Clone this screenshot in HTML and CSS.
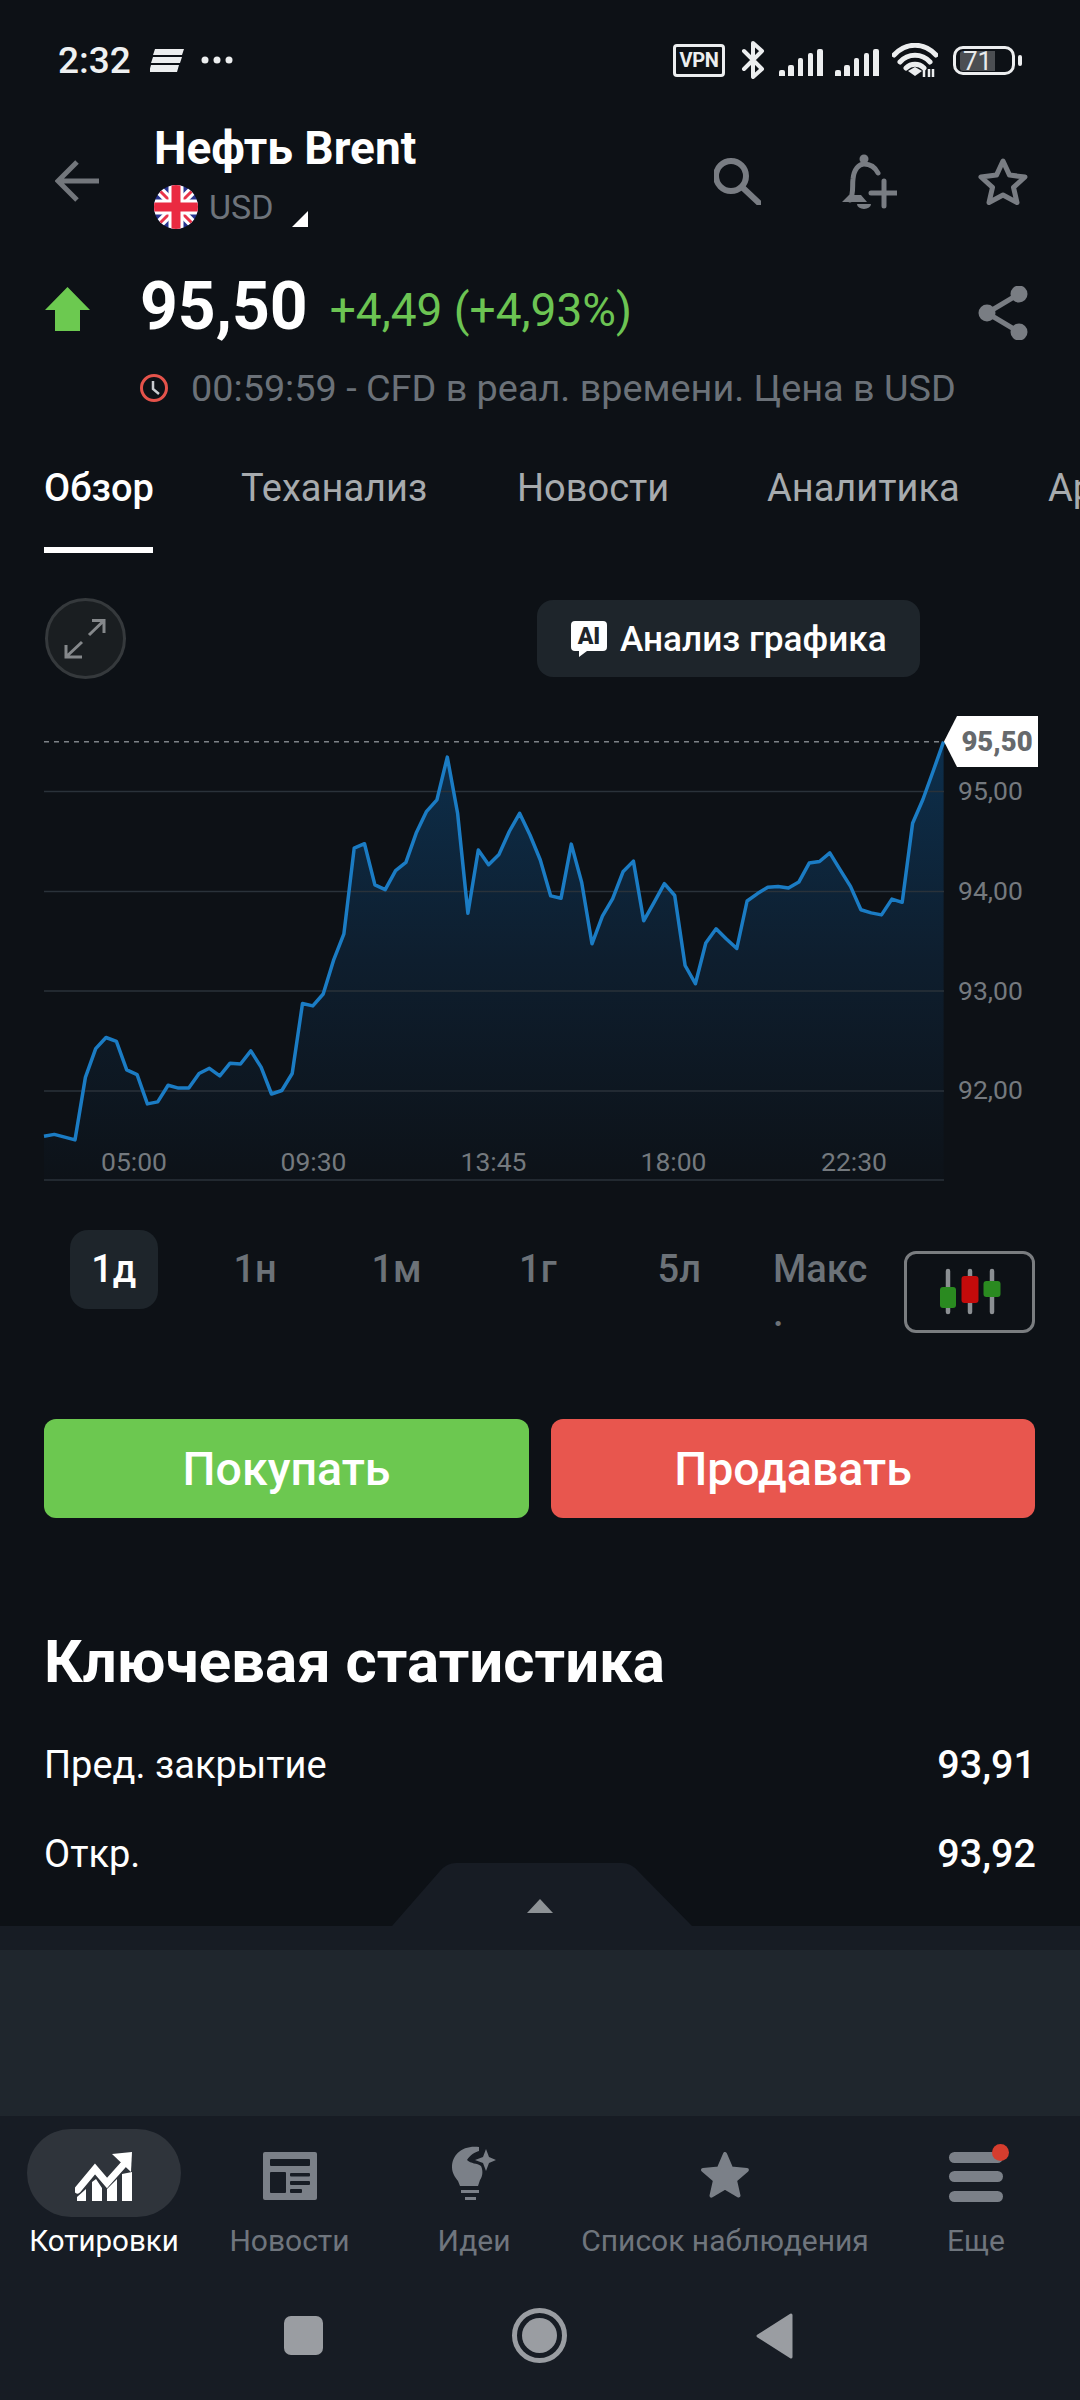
FILE: index.html
```html
<!DOCTYPE html>
<html lang="ru">
<head>
<meta charset="utf-8">
<title>Нефть Brent</title>
<link rel="stylesheet" href="styles.css">
</head>
<body>
<div class="screen">
  <main class="content">
    <div class="status">
      <span class="clock-time">2:32</span>
      <svg class="st-lines" viewBox="150 49 34 23"><path d="M155 49H184L182 55H153ZM153 57H182L180 63H151ZM151 65H179L177 72H149Z"/></svg>
      <svg class="st-dots" viewBox="201 54 32 12"><circle cx="205" cy="60" r="3.5"/><circle cx="217" cy="60" r="3.5"/><circle cx="229" cy="60" r="3.5"/></svg>
      <div class="status-right">
        <span class="vpn">VPN</span>
        <svg class="st-bt" viewBox="741 41 24 38"><path d="M744 51L762 69L753 77V43L762 51L744 69"/></svg>
        <svg class="st-signal" viewBox="779 47 44 27"><path d="M779 70a2 2 0 0 1 2-2h2a2 2 0 0 1 2 2v4h-6ZM788 65a2 2 0 0 1 2-2h2a2 2 0 0 1 2 2v9h-6ZM798 58a2 2 0 0 1 2-2h1a2 2 0 0 1 2 2v16h-5ZM808 53a2 2 0 0 1 2-2h1a2 2 0 0 1 2 2v21h-5ZM817 49a2 2 0 0 1 2-2h2a2 2 0 0 1 2 2v25h-6Z"/></svg>
        <svg class="st-signal" viewBox="779 47 44 27"><path d="M779 70a2 2 0 0 1 2-2h2a2 2 0 0 1 2 2v4h-6ZM788 65a2 2 0 0 1 2-2h2a2 2 0 0 1 2 2v9h-6ZM798 58a2 2 0 0 1 2-2h1a2 2 0 0 1 2 2v16h-5ZM808 53a2 2 0 0 1 2-2h1a2 2 0 0 1 2 2v21h-5ZM817 49a2 2 0 0 1 2-2h2a2 2 0 0 1 2 2v25h-6Z"/></svg>
        <svg class="st-wifi" viewBox="892 43 46 34">
          <path class="wave" d="M894 55C906 42 924 42 936 55M900 62C908 53 922 53 930 62M906 68C911 63 919 63 924 68"/>
          <path class="wave-dot" d="M908 71L915 67L922 71L915 76Z"/>
          <path class="wave-arrows" d="M924 69V77M929 69V77M933 69V77"/>
        </svg>
        <div class="battery"><span class="battery-level">71</span></div>
        <span class="battery-nub"></span>
      </div>
    </div>

    <header class="head">
      <svg class="ic-back" viewBox="55 160 44 42"><path d="M99 181H59M77 162L58 181L77 200"/></svg>
      <div class="instrument">
        <h1 class="title">Нефть Brent</h1>
        <div class="currency">
          <svg class="flag" viewBox="0 0 44 44">
            <defs><clipPath id="flag-round"><circle cx="22" cy="22" r="22"/></clipPath></defs>
            <g clip-path="url(#flag-round)">
              <rect width="44" height="44" fill="#27348f"/>
              <path d="M0 0L44 44M44 0L0 44" stroke="#fff" stroke-width="9"/>
              <path d="M0 0L44 44M44 0L0 44" stroke="#e8344a" stroke-width="3"/>
              <path d="M22 0V44M0 22H44" stroke="#fff" stroke-width="15"/>
              <path d="M22 0V44M0 22H44" stroke="#ea2a41" stroke-width="9"/>
            </g>
          </svg>
          <span class="cur-label">USD</span>
          <span class="corner"></span>
        </div>
      </div>
      <div class="actions">
        <svg class="ic-search" viewBox="715 156 47 47"><circle cx="732" cy="174" r="15"/><path d="M743 185L760 201"/></svg>
        <svg class="ic-bell" viewBox="843 153 55 55">
          <path class="bell-line" d="M851 199C855 192 853 185 854 178C855 168 860 163 865 163C871 163 876 166 879 172"/>
          <path class="bell-fill" d="M843 201L850 194L862 194L868 201ZM858 203H872A7 5 0 0 1 858 203Z"/>
          <circle class="bell-fill" cx="865" cy="158" r="4.500"/>
          <path class="bell-line" d="M872 192H898M885 180V205"/>
        </svg>
        <svg class="ic-star" viewBox="978 157 50 47"><path d="M1003 160L1009.5 174.1L1025 176L1013.5 186.4L1017 201.5L1003 194L989 201.5L992.5 186.4L981 176L996.5 174.1Z"/></svg>
      </div>
    </header>

    <section class="quote">
      <svg class="ic-up" viewBox="45 288 45 44"><path d="M67.5 288L90 311H80V332H55V311H45Z"/></svg>
      <span class="price">95,50</span>
      <span class="change">+4,49 (+4,93%)</span>
      <svg class="ic-share" viewBox="978 286 50 54">
        <path d="M1019 294L987 313L1019 332"/>
        <circle cx="1019" cy="294" r="8.5"/><circle cx="987" cy="313" r="8.5"/><circle cx="1019" cy="332" r="8.5"/>
      </svg>
    </section>

    <div class="meta">
      <svg class="ic-clock" viewBox="140 374 28 28"><circle cx="154" cy="388" r="12.5"/><path d="M153 381V389L159 394"/></svg>
      <span>00:59:59 - CFD в реал. времени. Цена в USD</span>
    </div>

    <nav class="tabs">
      <span class="tab tab-on">Обзор</span>
      <span class="tab">Теханализ</span>
      <span class="tab">Новости</span>
      <span class="tab">Аналитика</span>
      <span class="tab">Архив</span>
    </nav>

    <div class="toolbar">
      <span class="expand">
        <svg viewBox="48 601 75 75"><path d="M89 635L104 620.5M92 620.5H104V633M82 642L66 657M66 645V657H82"/></svg>
      </span>
      <span class="ai-btn">
        <svg class="ai-mark" viewBox="0 0 36 36">
          <path d="M4 0H32A4 4 0 0 1 36 4V26A4 4 0 0 1 32 30H16L8 36V30H4A4 4 0 0 1 0 26V4A4 4 0 0 1 4 0Z"/>
          <text x="18" y="23" text-anchor="middle">AI</text>
        </svg>
        Анализ графика
      </span>
    </div>

    <svg class="chart" viewBox="0 700 1080 490">
      <defs>
        <linearGradient id="area" gradientUnits="userSpaceOnUse" x1="0" y1="741" x2="0" y2="1180">
          <stop offset="0" stop-color="#0d2f4c"/>
          <stop offset="0.5" stop-color="#0e1e2e"/>
          <stop offset="1" stop-color="#0d1218"/>
        </linearGradient>
      </defs>
      <path class="area" d="M44 1136.3L54.3 1134.4L64.7 1137.1L75 1139.9L85.4 1077.4L95.7 1048.6L106 1037.5L116.4 1041.4L126.7 1069.9L137.1 1074.7L147.4 1103.9L157.7 1101.9L168.1 1085.3L178.4 1088.1L188.8 1088.1L199.1 1073.5L209.4 1068.3L219.8 1075.8L230.1 1063.2L240.5 1064L250.8 1050.9L261.1 1067.1L271.5 1094L281.8 1090.5L292.2 1073.5L302.5 1003.5L312.8 1005.9L323.2 994L333.5 960.4L343.9 933.9L354.2 848.1L364.5 843.7L374.9 884.9L385.2 889.6L395.6 870.6L405.9 862.3L416.2 833.1L426.6 811.3L436.9 799.9L447.3 757.1L457.6 813.3L467.9 913.3L478.3 850L488.6 864.7L499 854.4L509.3 831.5L519.6 813.3L530 835L540.3 860L550.7 895.9L561 898.3L571.3 844.1L581.7 882.5L592 943.8L602.4 916.1L612.7 898.7L623 871.8L633.4 861.1L643.7 920.8L654.1 902.3L664.4 883.7L674.7 895.5L685.1 965.5L695.4 983.7L705.8 943L716.1 928.8L726.4 939L736.8 948.5L747.1 901L757.5 893.6L767.8 887.2L778.1 886.4L788.5 888L798.8 882.1L809.2 863.1L819.5 861.5L829.8 852.8L840.2 869.8L850.5 886.4L860.9 909.8L871.2 912.9L881.5 914.9L891.9 899.1L902.2 902.3L912.6 823.2L922.9 799.5L933.2 771L943.6 741.7V1180H44Z"/>
      <path class="grid" d="M44 791.5H944M44 891.6H944M44 991H944M44 1091H944M44 1180H944"/>
      <path class="last-line" d="M44 741.7H944"/>
      <path class="trace" d="M44 1136.3L54.3 1134.4L64.7 1137.1L75 1139.9L85.4 1077.4L95.7 1048.6L106 1037.5L116.4 1041.4L126.7 1069.9L137.1 1074.7L147.4 1103.9L157.7 1101.9L168.1 1085.3L178.4 1088.1L188.8 1088.1L199.1 1073.5L209.4 1068.3L219.8 1075.8L230.1 1063.2L240.5 1064L250.8 1050.9L261.1 1067.1L271.5 1094L281.8 1090.5L292.2 1073.5L302.5 1003.5L312.8 1005.9L323.2 994L333.5 960.4L343.9 933.9L354.2 848.1L364.5 843.7L374.9 884.9L385.2 889.6L395.6 870.6L405.9 862.3L416.2 833.1L426.6 811.3L436.9 799.9L447.3 757.1L457.6 813.3L467.9 913.3L478.3 850L488.6 864.7L499 854.4L509.3 831.5L519.6 813.3L530 835L540.3 860L550.7 895.9L561 898.3L571.3 844.1L581.7 882.5L592 943.8L602.4 916.1L612.7 898.7L623 871.8L633.4 861.1L643.7 920.8L654.1 902.3L664.4 883.7L674.7 895.5L685.1 965.5L695.4 983.7L705.8 943L716.1 928.8L726.4 939L736.8 948.5L747.1 901L757.5 893.6L767.8 887.2L778.1 886.4L788.5 888L798.8 882.1L809.2 863.1L819.5 861.5L829.8 852.8L840.2 869.8L850.5 886.4L860.9 909.8L871.2 912.9L881.5 914.9L891.9 899.1L902.2 902.3L912.6 823.2L922.9 799.5L933.2 771L943.6 741.7"/>
      <path class="tag" d="M944 741.5L957 716H1038V767H957Z"/>
      <text class="tag-text" x="997" y="751" text-anchor="middle">95,50</text>
      <text class="axis" x="958" y="800">95,00</text>
      <text class="axis" x="958" y="900">94,00</text>
      <text class="axis" x="958" y="1000">93,00</text>
      <text class="axis" x="958" y="1099">92,00</text>
      <text class="axis" x="134" y="1171" text-anchor="middle">05:00</text>
      <text class="axis" x="313.5" y="1171" text-anchor="middle">09:30</text>
      <text class="axis" x="493.5" y="1171" text-anchor="middle">13:45</text>
      <text class="axis" x="673.5" y="1171" text-anchor="middle">18:00</text>
      <text class="axis" x="854" y="1171" text-anchor="middle">22:30</text>
    </svg>

    <div class="ranges">
      <span class="range range-on">1д</span>
      <span class="range">1н</span>
      <span class="range">1м</span>
      <span class="range">1г</span>
      <span class="range">5л</span>
      <span class="range range-max">Макс.</span>
      <span class="chart-type">
        <svg viewBox="907 1254 125 76">
          <path class="wick" d="M948 1271V1312M970 1271V1312M992 1271V1312"/>
          <rect class="up" x="940" y="1287" width="16" height="21" rx="3"/>
          <rect class="down" x="961.500" y="1276" width="17" height="27" rx="3"/>
          <rect class="up" x="983.500" y="1281" width="17" height="16" rx="3"/>
        </svg>
      </span>
    </div>

    <div class="trade">
      <span class="btn btn-buy">Покупать</span>
      <span class="btn btn-sell">Продавать</span>
    </div>

    <h2 class="stats-title">Ключевая статистика</h2>
    <dl class="stats">
      <div class="stat"><dt>Пред. закрытие</dt><dd>93,91</dd></div>
      <div class="stat"><dt>Откр.</dt><dd>93,92</dd></div>
    </dl>
  </main>

  <footer class="sheet">
    <svg class="handle" viewBox="392 1863 300 63">
      <path class="handle-body" d="M392 1926L440 1871Q447 1863 456 1863H622Q631 1863 638 1871L692 1926Z"/>
      <path class="handle-tip" d="M540 1899L553 1913H527Z"/>
    </svg>
    <div class="sheet-band"></div>
    <div class="sheet-panel"></div>
    <div class="bottom">
      <nav class="dock">
        <div class="dock-item dock-on">
          <span class="dock-icon">
            <svg class="ic-nav-chart" viewBox="75 2148 58 50">
              <path class="rise" d="M77.500 2186L95 2165L107 2179L124 2160"/>
              <path d="M112 2150L132 2148L131 2168Z"/>
              <path d="M77 2197V2193L86 2185V2197ZM92 2197V2178L96 2175L102 2184V2197ZM107 2197V2185L117 2175V2197ZM122 2197V2170L132 2168V2197Z"/>
            </svg>
          </span>
          <span class="dock-label">Котировки</span>
        </div>
        <div class="dock-item">
          <span class="dock-icon">
            <svg class="ic-news" viewBox="262 2149 54 48">
              <rect class="sheet-fg" x="262" y="2149" width="54" height="48" rx="2"/>
              <rect class="sheet-bg" x="269" y="2156" width="40" height="7" rx="1"/>
              <rect class="sheet-bg" x="269" y="2169" width="16" height="21" rx="1"/>
              <rect class="sheet-bg" x="289" y="2170" width="20" height="3.500" rx="1"/>
              <rect class="sheet-bg" x="289" y="2178" width="20" height="4" rx="1"/>
              <rect class="sheet-bg" x="289" y="2186" width="12" height="4" rx="1"/>
            </svg>
          </span>
          <span class="dock-label">Новости</span>
        </div>
        <div class="dock-item">
          <span class="dock-icon">
            <svg class="ic-idea" viewBox="455 2146 44 54">
              <path d="M482 2147C465 2145 455 2155 455 2167C455 2173 458 2177 461 2181L463 2186H481L483 2180C486 2176 486 2170 484 2166C480 2163 474 2164 470 2160C473 2155 478 2152 482 2151ZM464 2190H482V2193H464ZM468 2197H479V2200H468ZM489 2149L492 2157L499 2160L492 2163L489 2171L486 2163L478 2160L486 2157Z"/>
            </svg>
          </span>
          <span class="dock-label">Идеи</span>
        </div>
        <div class="dock-item">
          <span class="dock-icon">
            <svg class="ic-watch" viewBox="700 2149 50 48"><path d="M725 2151L731.200 2165.500L746.900 2166.900L735 2177.200L738.500 2192.600L725 2184.500L711.500 2192.600L715 2177.200L703.100 2166.900L718.800 2165.500Z"/></svg>
          </span>
          <span class="dock-label">Список наблюдения</span>
        </div>
        <div class="dock-item">
          <span class="dock-icon">
            <span class="burger"><i></i><i></i><i></i><b class="burger-dot"></b></span>
          </span>
          <span class="dock-label">Еще</span>
        </div>
      </nav>
      <div class="sysnav">
        <span class="sys-square"></span>
        <span class="sys-home"></span>
        <svg class="sys-back" viewBox="755 2312 37 46"><path d="M790 2314V2356L757 2335Z"/></svg>
      </div>
    </div>
  </footer>
</div>
</body>
</html>
```

FILE: styles.css
```css
* { box-sizing: border-box; margin: 0; padding: 0; }
html, body { width: 1080px; height: 2400px; background: #0d1116; }
body { font-family: Roboto, "Liberation Sans", sans-serif; color: #fff; overflow: hidden; }
svg { display: block; flex: none; }

.screen { width: 1080px; height: 2400px; display: flex; flex-direction: column; overflow: hidden; }
.content { flex: 1; min-height: 0; overflow: hidden; }

/* status bar */
.status { height: 120px; padding: 0 58px 0 58px; display: flex; align-items: center; }
.clock-time { font-size: 37px; font-weight: 500; color: #eef0f1; width: 72px; white-space: nowrap; }
.st-lines { width: 34px; height: 23px; margin-left: 20px; fill: #eceeef; }
.st-dots { width: 32px; height: 12px; margin-left: 17px; fill: #eceeef; }
.status-right { margin-left: auto; display: flex; align-items: center; }
.vpn { width: 52px; height: 33px; border: 3.5px solid #eceeef; border-radius: 4px; font-size: 20px; font-weight: 700; color: #eceeef; line-height: 26px; text-align: center; letter-spacing: -0.3px; }
.st-bt { width: 24px; height: 38px; margin-left: 16px; fill: none; stroke: #eceeef; stroke-width: 4; stroke-linejoin: round; stroke-linecap: round; }
.st-signal { width: 44px; height: 27px; margin: 5px 0 0 14px; fill: #eceeef; }
.st-signal + .st-signal { margin-left: 12px; }
.st-wifi { width: 46px; height: 34px; margin-left: 13px; fill: none; }
.wave { stroke: #eceeef; stroke-width: 5; stroke-linecap: round; }
.wave-dot { fill: #eceeef; }
.wave-arrows { stroke: #eceeef; stroke-width: 2.5; }
.battery { width: 62px; height: 29px; margin-left: 15px; border: 3px solid #eceeef; border-radius: 10px; padding: 2px 0 0 4px; }
.battery-level { display: block; width: 35px; height: 20px; background: #4b4e52; border-radius: 3px 0 0 3px; font-size: 26px; line-height: 20px; text-align: center; color: #e8eaeb; }
.battery-nub { width: 4px; height: 11px; margin-left: 3px; background: #eceeef; border-radius: 2px; }

/* instrument header */
.head { height: 122px; padding: 0 52px 0 55px; display: flex; align-items: center; }
.ic-back { width: 44px; height: 42px; fill: none; stroke: #73777c; stroke-width: 5; }
.instrument { margin-left: 55px; align-self: flex-start; padding-top: 3px; }
.title { font-size: 46px; line-height: 50px; font-weight: 700; white-space: nowrap; }
.currency { margin-top: 14px; height: 40px; display: flex; align-items: center; position: relative; }
.flag { width: 44px; height: 44px; }
.cur-label { margin-left: 11px; font-size: 34px; color: #6e747b; line-height: 40px; }
.corner { width: 0; height: 0; margin: 23px 0 0 18px; border-style: solid; border-width: 0 0 16px 16px; border-color: transparent transparent #fff transparent; }
.actions { margin-left: auto; display: flex; align-items: center; gap: 81px; }
.ic-search { width: 47px; height: 47px; fill: none; stroke: #797d83; stroke-width: 6; stroke-linecap: round; }
.ic-bell { width: 55px; height: 55px; }
.bell-line { fill: none; stroke: #797d83; stroke-width: 5; stroke-linecap: round; }
.bell-fill { fill: #797d83; }
.ic-star { width: 50px; height: 47px; fill: none; stroke: #797d83; stroke-width: 5; stroke-linejoin: round; }

/* last price */
.quote { margin-top: 27px; height: 76px; padding: 0 52px 0 45px; display: flex; align-items: center; }
.ic-up { width: 45px; height: 44px; fill: #6cc950; margin-top: 4px; }
.price { margin-left: 50px; font-size: 66px; line-height: 76px; font-weight: 700; }
.change { margin-left: 22px; font-size: 46px; color: #6cc453; margin-top: 6px; white-space: nowrap; }
.ic-share { width: 50px; height: 54px; margin: 12px 0 0 auto; fill: #797d83; stroke: #797d83; }
.ic-share path { fill: none; stroke-width: 5; }
.ic-share circle { stroke: none; }

.meta { margin-top: 21px; height: 44px; padding-left: 140px; display: flex; align-items: center; gap: 23px; font-size: 37.800px; line-height: 44px; color: #6b7178; white-space: nowrap; }
.ic-clock { width: 28px; height: 28px; fill: none; stroke-width: 3; stroke: #e5534b; }
.ic-clock path { stroke: #c9ccd0; stroke-width: 2.500; }

/* section tabs */
.tabs { margin-top: 56px; padding-left: 44px; display: grid; grid-template-columns: 197px 276px 250px 281px 200px; font-size: 38px; line-height: 44px; color: #a7abae; white-space: nowrap; }
.tab { height: 87px; }
.tab-on { color: #fff; font-weight: 500; width: 109px; border-bottom: 6px solid #fff; }

/* chart controls */
.toolbar { margin-top: 45px; height: 81px; padding: 0 160px 0 45px; display: flex; justify-content: space-between; }
.expand { width: 81px; height: 81px; border-radius: 50%; background: #1a1e21; border: 3px solid #35393c; display: block; overflow: hidden; }
.expand svg { width: 75px; height: 75px; fill: none; stroke: #85888b; stroke-width: 3; }
.ai-btn { margin-top: 2px; width: 383px; height: 77px; padding-left: 34px; border-radius: 16px; background: #1e252b; display: flex; align-items: center; gap: 13px; font-size: 35.200px; font-weight: 500; white-space: nowrap; }
.ai-mark { width: 36px; height: 36px; fill: #fff; }
.ai-mark text { font-family: Roboto, "Liberation Sans", sans-serif; font-size: 23px; font-weight: 900; fill: #1e252b; }

/* price chart */
.chart { width: 1080px; height: 490px; margin-top: 21px; }
.area { fill: url(#area); }
.grid { fill: none; stroke: #2a323a; stroke-width: 1.5; }
.last-line { fill: none; stroke: #7e8388; stroke-width: 1.5; stroke-dasharray: 5 5; }
.trace { fill: none; stroke: #1b7cc4; stroke-width: 3.500; stroke-linejoin: round; }
.tag { fill: #fff; }
.tag-text { font-family: Roboto, sans-serif; font-size: 27.500px; font-weight: 900; fill: #66696c; }
.axis { font-family: Roboto, sans-serif; font-size: 26.500px; fill: #74797e; }

/* range selector */
.ranges { margin-top: 40px; height: 103px; padding-left: 43px; display: grid; grid-template-columns: repeat(5, 141.400px) 154px 131px; align-items: start; font-size: 38px; font-weight: 500; color: #6c7278; }
.range { justify-self: center; width: 88px; height: 79px; line-height: 79px; text-align: center; border-radius: 18px; }
.range-on { background: #1e252b; color: #fff; }
.range-max { justify-self: start; margin: 17px 0 0 23px; width: 100px; height: auto; line-height: 44px; text-align: left; line-break: anywhere; }
.chart-type { display: block; margin-top: 21px; width: 131px; height: 82px; border: 3px solid #7a7d80; border-radius: 12px; overflow: hidden; }
.chart-type svg { width: 125px; height: 76px; }
.wick { fill: none; stroke: #8b8f93; stroke-width: 4.500; stroke-linecap: round; }
.up { fill: #2a8a20; }
.down { fill: #c40b0b; }

/* trade buttons */
.trade { margin-top: 86px; padding: 0 45px 0 44px; display: grid; grid-template-columns: 485px 484px; gap: 22px; }
.btn { height: 99px; border-radius: 12px; display: flex; align-items: center; justify-content: center; font-size: 46.500px; font-weight: 500; }
.btn-buy { background: #6cc850; }
.btn-sell { background: #e8564e; }

/* key statistics */
.stats-title { margin: 112px 0 0 44px; font-size: 60px; line-height: 64px; font-weight: 700; white-space: nowrap; }
.stats { margin-top: 49px; padding: 0 44px; display: flex; flex-direction: column; gap: 45px; font-size: 38px; line-height: 44px; }
.stat { display: flex; justify-content: space-between; }
.stat dd { font-size: 39.500px; font-weight: 500; }

/* bottom sheet and navigation */
.sheet { flex: none; height: 474px; position: relative; display: flex; flex-direction: column; background: #171c24; }
.handle { position: absolute; left: 392px; bottom: 100%; width: 300px; height: 63px; }
.handle-body { fill: #171c24; }
.handle-tip { fill: #8e9296; }
.sheet-band { height: 24px; }
.sheet-panel { height: 166px; background: #1f262d; }
.bottom { flex: 1; }
.dock { padding-top: 13px; display: grid; grid-template-columns: 208px 163px 206px 296px 206px; color: #6f757d; }
.dock-item { display: flex; flex-direction: column; align-items: center; }
.dock-icon { width: 154px; height: 88px; border-radius: 44px; display: flex; align-items: center; justify-content: center; }
.dock-on .dock-icon { background: #2f343b; }
.dock-label { margin-top: 6px; font-size: 30px; line-height: 36px; white-space: nowrap; }
.dock-on .dock-label { color: #fff; font-size: 29.500px; }
.ic-nav-chart { width: 58px; height: 50px; fill: #fff; margin-top: 7px; }
.rise { fill: none; stroke: #fff; stroke-width: 7; stroke-linecap: round; }
.ic-news { width: 54px; height: 48px; margin-top: 5px; }
.sheet-fg { fill: #7b8088; }
.sheet-bg { fill: #171c24; }
.ic-idea { width: 44px; height: 54px; fill: #7b8088; }
.ic-watch { width: 50px; height: 48px; fill: #7b8088; stroke: #7b8088; stroke-width: 4; stroke-linejoin: round; margin-top: 5px; }
.burger { width: 54px; height: 50px; margin-top: 7px; display: flex; flex-direction: column; justify-content: space-between; position: relative; }
.burger i { display: block; height: 11px; border-radius: 6px; background: #7b8088; }
.burger-dot { position: absolute; right: -6px; top: -8px; width: 17px; height: 17px; border-radius: 50%; background: #d63d2e; }
.sysnav { margin-top: 49px; padding-right: 4px; display: flex; justify-content: center; align-items: center; gap: 189px; }
.sys-square { width: 39px; height: 39px; border-radius: 7px; background: #9a9da2; }
.sys-home { width: 55px; height: 55px; border-radius: 50%; border: 5px solid #9a9da2; padding: 5px; background: #9a9da2; background-clip: content-box; }
.sys-back { width: 37px; height: 46px; fill: #9a9da2; stroke: #9a9da2; stroke-width: 3; stroke-linejoin: round; }
```
